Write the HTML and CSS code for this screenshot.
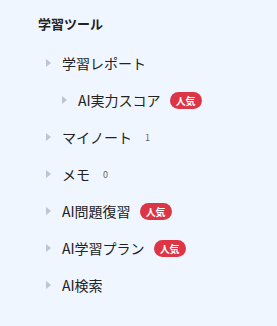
FILE: index.html
```html
<!DOCTYPE html>
<html lang="ja">
<head>
<meta charset="utf-8">
<link rel="stylesheet" href="styles.css">
</head>
<body>
<nav class="panel">
  <h2 class="title">学習ツール</h2>
  <ul class="menu">
    <li class="item"><span class="arrow"></span><span class="label">学習レポート</span></li>
    <li class="item sub"><span class="arrow"></span><span class="label">AI実力スコア</span><span class="badge">人気</span></li>
    <li class="item"><span class="arrow"></span><span class="label">マイノート</span><span class="count">1</span></li>
    <li class="item"><span class="arrow"></span><span class="label">メモ</span><span class="count">0</span></li>
    <li class="item"><span class="arrow"></span><span class="label">AI問題復習</span><span class="badge">人気</span></li>
    <li class="item"><span class="arrow"></span><span class="label">AI学習プラン</span><span class="badge">人気</span></li>
    <li class="item"><span class="arrow"></span><span class="label">AI検索</span></li>
  </ul>
</nav>
</body>
</html>
```
FILE: styles.css
```css
html, body {
  margin: 0;
  padding: 0;
  background: #f0f6ff;
}
body {
  font-family: "Noto Sans CJK JP", "Noto Sans", sans-serif;
  color: #222;
}
.panel {
  padding: 14px 0 0 38px;
}
.title {
  margin: 0;
  font-size: 13px;
  font-weight: 700;
  line-height: 20px;
  color: #222;
}
.menu {
  list-style: none;
  margin: 0;
  padding: 18px 0 0 8px;
  display: flex;
  flex-direction: column;
  gap: 15px;
}
.item {
  display: flex;
  align-items: center;
  height: 22px;
}
.item.sub {
  padding-left: 16px;
}
.arrow {
  width: 0;
  height: 0;
  border-top: 4px solid transparent;
  border-bottom: 4px solid transparent;
  border-left: 5px solid #c0c4cc;
  margin-right: 11px;
}
.label {
  font-size: 14px;
  line-height: 22px;
  color: #222;
}
.badge {
  margin-left: 9px;
  background: #dc3545;
  color: #fff;
  font-size: 10px;
  font-weight: 700;
  line-height: 17px;
  padding: 0 6px;
  border-radius: 9px;
}
.count {
  margin-left: 13px;
  font-size: 9px;
  color: #666;
}
```
